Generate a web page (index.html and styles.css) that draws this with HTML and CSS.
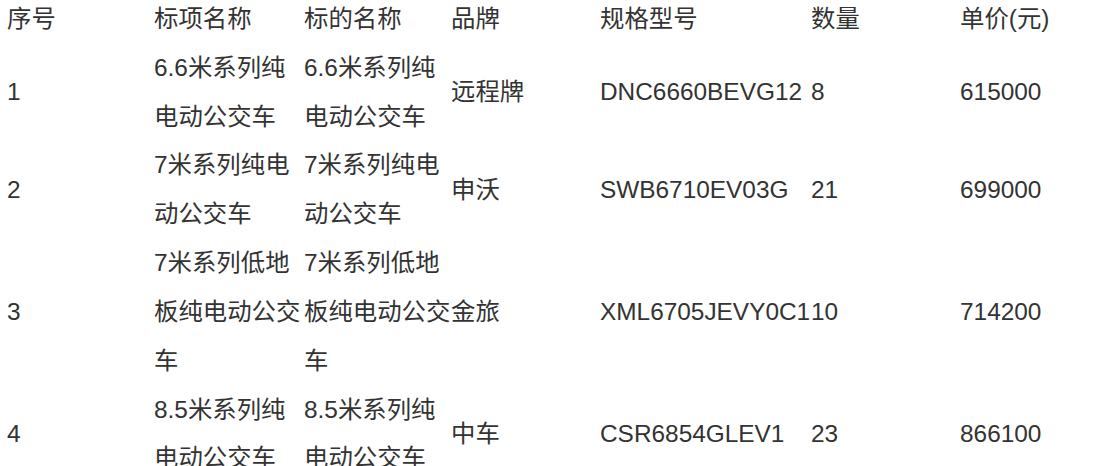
FILE: index.html
```html
<!DOCTYPE html>
<html lang="zh-CN">
<head>
    <meta charset="UTF-8">
    <meta name="viewport" content="width=device-width, initial-scale=1.0">
    <title>采购标的</title>
    <link rel="stylesheet" href="styles.css">
</head>
<body>
    <table class="bid-table">
        <colgroup>
            <col class="col-no">
            <col class="col-item">
            <col class="col-target">
            <col class="col-brand">
            <col class="col-model">
            <col class="col-qty">
            <col class="col-price">
        </colgroup>
        <thead>
            <tr>
                <th>序号</th>
                <th>标项名称</th>
                <th>标的名称</th>
                <th>品牌</th>
                <th>规格型号</th>
                <th>数量</th>
                <th>单价(元)</th>
            </tr>
        </thead>
        <tbody>
            <tr>
                <td>1</td>
                <td>6.6米系列纯电动公交车</td>
                <td>6.6米系列纯电动公交车</td>
                <td>远程牌</td>
                <td>DNC6660BEVG12</td>
                <td>8</td>
                <td>615000</td>
            </tr>
            <tr>
                <td>2</td>
                <td>7米系列纯电动公交车</td>
                <td>7米系列纯电动公交车</td>
                <td>申沃</td>
                <td>SWB6710EV03G</td>
                <td>21</td>
                <td>699000</td>
            </tr>
            <tr>
                <td>3</td>
                <td>7米系列低地板纯电动公交车</td>
                <td>7米系列低地板纯电动公交车</td>
                <td>金旅</td>
                <td>XML6705JEVY0C1</td>
                <td>10</td>
                <td>714200</td>
            </tr>
            <tr>
                <td>4</td>
                <td>8.5米系列纯电动公交车</td>
                <td>8.5米系列纯电动公交车</td>
                <td>中车</td>
                <td>CSR6854GLEV1</td>
                <td>23</td>
                <td>866100</td>
            </tr>
        </tbody>
    </table>
</body>
</html>
```

FILE: styles.css
```css
* {
    margin: 0;
    padding: 0;
    box-sizing: border-box;
}

body {
    background: #ffffff;
    color: #333333;
    font-family: 'Liberation Sans', Arial, 'Noto Sans CJK SC', sans-serif;
    font-size: 24.4px;
}

.bid-table {
    table-layout: fixed;
    border-collapse: collapse;
    width: 1088px;
    margin: -5px 0 0 7px;
}

.col-no { width: 147px; }
.col-item { width: 150px; }
.col-target { width: 147px; }
.col-brand { width: 149px; }
.col-model { width: 211px; }
.col-qty { width: 149px; }
.col-price { width: 135px; }

th, td {
    padding: 0;
    line-height: 2;
    text-align: left;
    vertical-align: middle;
    font-weight: normal;
}
```
